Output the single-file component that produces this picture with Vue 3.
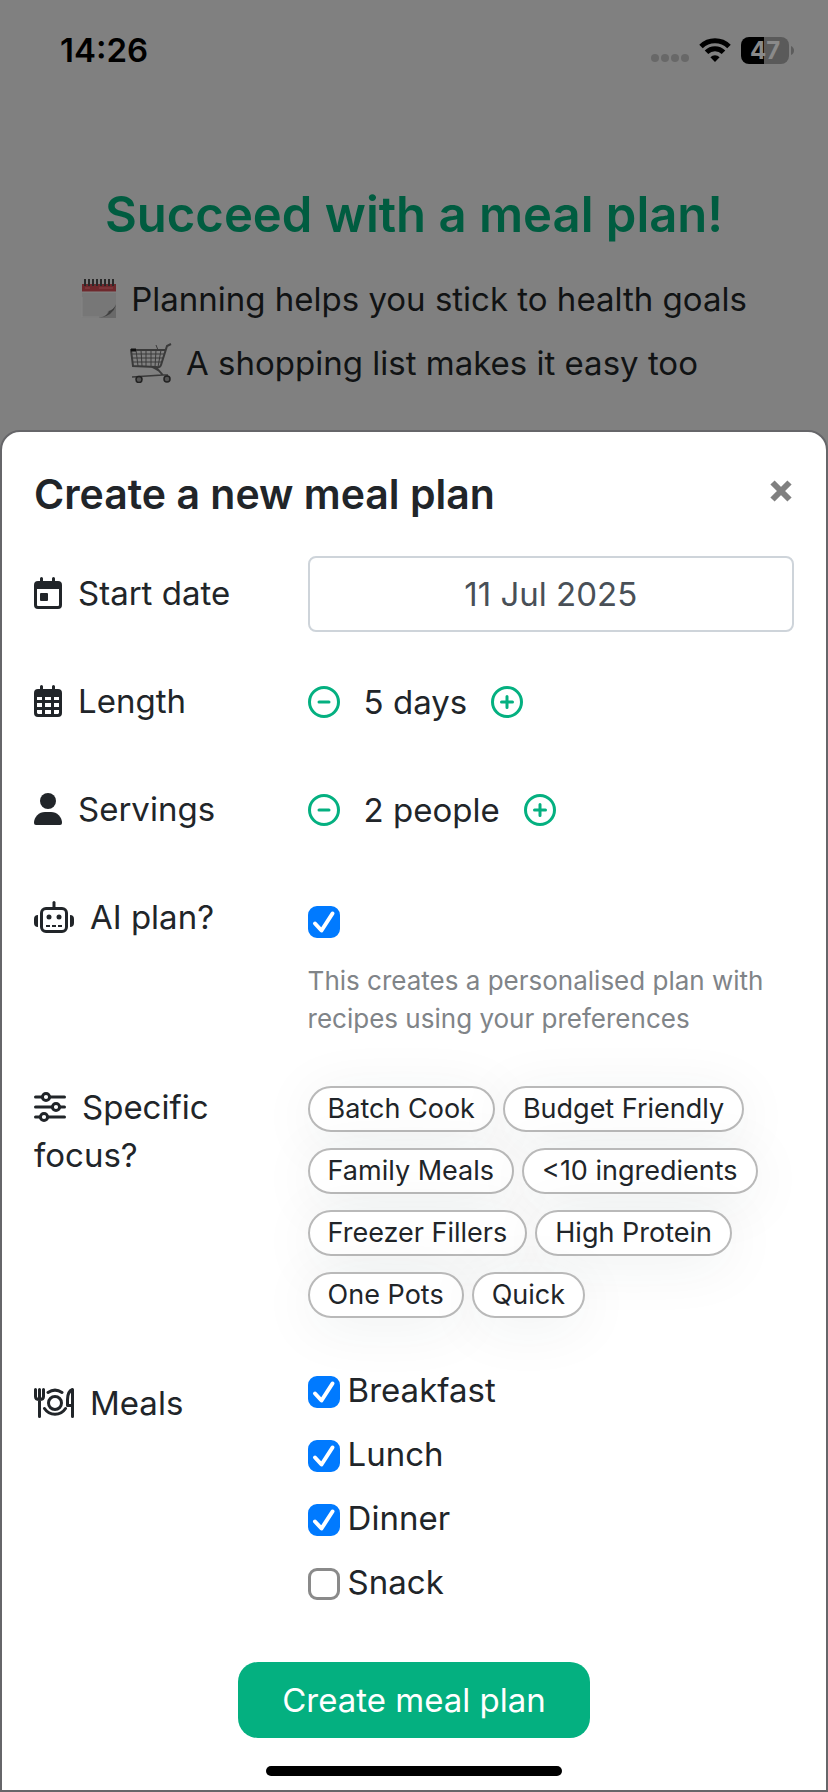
<script setup>
import { ref } from 'vue'

const startDate = ref('11 Jul 2025')
const days = ref(5)
const people = ref(2)
const aiPlan = ref(true)
const focusOptions = [
  'Batch Cook', 'Budget Friendly', 'Family Meals', '<10 ingredients',
  'Freezer Fillers', 'High Protein', 'One Pots', 'Quick',
]
const selectedFocus = ref([])
const meals = ref([
  { name: 'Breakfast', on: true },
  { name: 'Lunch', on: true },
  { name: 'Dinner', on: true },
  { name: 'Snack', on: false },
])

function toggleFocus(name) {
  const i = selectedFocus.value.indexOf(name)
  if (i < 0) selectedFocus.value.push(name)
  else selectedFocus.value.splice(i, 1)
}
</script>

<template>
  <div class="page">
    <div class="status">
      <span class="time">14:26</span>
      <div class="indicators">
        <svg class="dots" width="38" height="8" viewBox="0 0 38 8" aria-hidden="true">
          <circle cx="4" cy="4" r="4" /><circle cx="14" cy="4" r="4" /><circle cx="24" cy="4" r="4" /><circle cx="34" cy="4" r="4" />
        </svg>
        <svg class="wifi" width="32" height="24" viewBox="0 0 32 24" aria-hidden="true">
          <path d="M2 8.5a20 20 0 0 1 28 0" /><path d="M7.5 14.2a12 12 0 0 1 17 0" />
          <path class="wifi-tip" d="M16 24l-4.6-4.8a6.5 6.5 0 0 1 9.2 0z" />
        </svg>
        <div class="battery-wrap">
          <div class="battery">47</div>
          <svg width="3" height="9" viewBox="0 0 3 9" aria-hidden="true"><path d="M0 0q3 1.5 3 4.500t-3 4.500z" fill="#5c5c5c" /></svg>
        </div>
      </div>
    </div>

    <header class="intro">
      <h1>Succeed with a meal plan!</h1>
      <p>
        <svg width="36" height="40" viewBox="0 0 36 40" aria-hidden="true">
          <path d="M1 5h34v21L20 39H1z" fill="#777" />
          <path d="M1 5h34v8H1z" fill="#6e282c" />
          <path d="M1 13h34M1 18v20h17" stroke="#858585" fill="none" />
          <path d="M35 25v14H18q8-2 9-7 5-1 8-7z" fill="#696969" />
          <path d="M18 39q9-2 10-7 4-1 7-6-3 11-17 13z" fill="#3f3f3f" />
          <path d="M4 0v7M8 0v7M12 0v7M16 0v7M20 0v7M24 0v7M28 0v7M32 0v7" stroke="#292929" stroke-width="2" />
          <path d="M4 9h5M18 9h14" stroke="#854449" stroke-width="1" />
        </svg>
        <span>Planning helps you stick to health goals</span>
      </p>
      <p>
        <svg width="42" height="40" viewBox="0 0 42 40" aria-hidden="true" fill="none" stroke="#3a3a3a">
          <path d="M41 1l-4 2-6 19q-1 3-5 2L3 23 1 7h34" stroke-width="2" />
          <path d="M2 11h32M2 15h31M3 19h29M6 7l2 16M11 7l1 16M16 7v16M21 7v17M26 7l-1 17M31 7l-3 17M26 2l2 5" stroke-width="1" />
          <path d="M22 24q9 4 10 8L2 34M26 24l7 8h5" stroke-width="1.500" />
          <path d="M1 7h5" stroke="#111" stroke-width="3" />
          <circle cx="9" cy="36.500" r="3" fill="#555" stroke="#222" stroke-width="1.500" /><circle cx="37" cy="36" r="3" fill="#555" stroke="#222" stroke-width="1.500" />
        </svg>
        <span>A shopping list makes it easy too</span>
      </p>
    </header>

    <form class="sheet" role="dialog" aria-labelledby="sheet-title" @submit.prevent>
      <div class="sheet-head">
        <h2 id="sheet-title">Create a new meal plan</h2>
        <button type="button" class="close" aria-label="Close">
          <svg width="22" height="22" viewBox="0 0 22 22"><path d="M2.500 2.500l17 17M19.500 2.500l-17 17" stroke="#808080" stroke-width="6" /></svg>
        </button>
      </div>

      <div class="rows">
        <div class="row">
          <label class="name" for="start">
            <svg width="28" height="32" viewBox="0 0 28 32" aria-hidden="true">
              <path d="M6 1.500a1.500 1.500 0 0 1 3 0V4h9V1.500a1.500 1.500 0 0 1 3 0V4h3a4 4 0 0 1 4 4v20a4 4 0 0 1-4 4H4a4 4 0 0 1-4-4V8a4 4 0 0 1 4-4h2zM3 12v16a1 1 0 0 0 1 1h20a1 1 0 0 0 1-1V12z" fill="currentColor" fill-rule="evenodd" />
              <rect x="6" y="16" width="8" height="8" rx="1" fill="currentColor" />
            </svg>Start date</label>
          <input id="start" v-model="startDate" class="date" type="text">
        </div>

        <div class="row">
          <span class="name">
            <svg width="28" height="32" viewBox="0 0 28 32" aria-hidden="true">
              <path d="M6 1.500a1.500 1.500 0 0 1 3 0V4h9V1.500a1.500 1.500 0 0 1 3 0V4h3a4 4 0 0 1 4 4v20a4 4 0 0 1-4 4H4a4 4 0 0 1-4-4V8a4 4 0 0 1 4-4h2zM3 12v3h5v-3zm8 0v3h6v-3zm9 0v3h5v-3zM3 18v4h5v-4zm8 0v4h6v-4zm9 0v4h5v-4zM3 25v3l1 1h4v-4zm8 0v4h6v-4zm9 0v4h4l1-1v-3z" fill="currentColor" fill-rule="evenodd" />
            </svg>Length</span>
          <div class="stepper">
            <button type="button" aria-label="Fewer days" @click="days--">
              <svg width="32" height="32" viewBox="0 0 32 32"><circle cx="16" cy="16" r="14.500" /><path d="M11 16h10" /></svg>
            </button>
            <output>{{ days }} days</output>
            <button type="button" aria-label="More days" @click="days++">
              <svg width="32" height="32" viewBox="0 0 32 32"><circle cx="16" cy="16" r="14.500" /><path d="M10.500 16h11M16 10.500v11" /></svg>
            </button>
          </div>
        </div>

        <div class="row">
          <span class="name">
            <svg width="28" height="32" viewBox="0 0 28 32" aria-hidden="true" fill="currentColor">
              <circle cx="14" cy="8" r="8" /><path d="M0 30a11 11 0 0 1 11-11h6a11 11 0 0 1 11 11q0 2-2 2H2q-2 0-2-2z" />
            </svg>Servings</span>
          <div class="stepper">
            <button type="button" aria-label="Fewer people" @click="people--">
              <svg width="32" height="32" viewBox="0 0 32 32"><circle cx="16" cy="16" r="14.500" /><path d="M11 16h10" /></svg>
            </button>
            <output>{{ people }} people</output>
            <button type="button" aria-label="More people" @click="people++">
              <svg width="32" height="32" viewBox="0 0 32 32"><circle cx="16" cy="16" r="14.500" /><path d="M10.500 16h11M16 10.500v11" /></svg>
            </button>
          </div>
        </div>

        <div class="row">
          <label class="name" for="ai">
            <svg width="40" height="32" viewBox="0 0 40 32" aria-hidden="true" fill="none" stroke="currentColor" stroke-width="3">
              <rect x="7.500" y="7.500" width="25" height="23" rx="4.500" />
              <path d="M20 7V1.500" stroke-linecap="round" />
              <path d="M4 14v12a4 4 0 0 1-4-4v-4a4 4 0 0 1 4-4zM36 14v12a4 4 0 0 0 4-4v-4a4 4 0 0 0-4-4z" fill="currentColor" stroke="none" />
              <circle cx="15" cy="16" r="2.500" fill="currentColor" stroke="none" /><circle cx="25" cy="16" r="2.500" fill="currentColor" stroke="none" />
              <path d="M12 25h4M18 25h4M24 25h4" stroke-width="2" />
            </svg>AI plan?</label>
          <div class="ai">
            <span class="check">
              <input id="ai" v-model="aiPlan" type="checkbox" aria-describedby="ai-help">
              <svg width="32" height="32" viewBox="0 0 32 32" aria-hidden="true"><path d="M7 17.500l6.500 7L24.500 7.500" /></svg>
            </span>
            <p id="ai-help">This creates a personalised plan with recipes using your preferences</p>
          </div>
        </div>

        <div class="row">
          <span id="focus-name" class="name">
            <svg width="32" height="32" viewBox="0 0 32 32" aria-hidden="true" fill="none" stroke="currentColor" stroke-width="3" stroke-linecap="round">
              <circle cx="12" cy="6" r="3.600" /><circle cx="22" cy="16" r="3.600" /><circle cx="10" cy="26" r="3.600" />
              <path d="M1.500 6h7M15.500 6h15M1.500 16h17M25.500 16h5M1.500 26h5M13.500 26h17" />
            </svg>Specific focus?</span>
          <div class="chips" role="group" aria-labelledby="focus-name">
            <button
              v-for="name in focusOptions" :key="name" type="button" class="chip"
              :aria-pressed="selectedFocus.includes(name)" @click="toggleFocus(name)"
            >{{ name }}</button>
          </div>
        </div>

        <div class="row">
          <span id="meals-name" class="name">
            <svg width="40" height="32" viewBox="0 0 40 32" aria-hidden="true" fill="none" stroke="currentColor" stroke-width="3" stroke-linecap="round">
              <path d="M1.500 2.500v7q0 3 4 3t4-3v-7M5.500 2.500V29.500" />
              <circle cx="21" cy="16" r="6.500" />
              <path d="M14 5.500a12.500 12.500 0 0 1 14 0M10.500 21.500a12.500 12.500 0 0 0 21 0" />
              <path d="M38.500 29.500v-27q-5 2-5 10v6h5" stroke-linejoin="round" />
            </svg>Meals</span>
          <div class="meals" role="group" aria-labelledby="meals-name">
            <label v-for="meal in meals" :key="meal.name" class="meal">
              <span class="check">
                <input v-model="meal.on" type="checkbox">
                <svg width="32" height="32" viewBox="0 0 32 32" aria-hidden="true"><path d="M7 17.500l6.500 7L24.500 7.500" /></svg>
              </span>
              <span>{{ meal.name }}</span>
            </label>
          </div>
        </div>
      </div>

      <button type="submit" class="submit">Create meal plan</button>
      <div class="home-bar"></div>
    </form>
  </div>
</template>

<style>
body { background: #808080; }
</style>

<style scoped>
.page {
  min-height: 100vh;
  box-sizing: border-box;
  display: flex;
  flex-direction: column;
  background: #808080;
  color: #212529;
  font-family: Inter, "Open Sans", sans-serif;
  font-size: 33px;
  line-height: 48px;
}
button, input { font: inherit; color: inherit; margin: 0; }
h1, h2, p { margin: 0; }
svg { display: block; flex: none; }

.status {
  display: flex;
  justify-content: space-between;
  align-items: center;
  height: 100px;
  padding: 0 34px 0 60px;
  color: #000;
}
.time { font-weight: 600; }
.indicators { display: flex; align-items: center; gap: 10px; }
.dots { fill: #686868; align-self: flex-end; margin-bottom: 2px; }
.wifi { fill: none; stroke: #000; stroke-width: 5; }
.wifi-tip { fill: #000; stroke: none; }
.battery-wrap { display: flex; align-items: center; gap: 2px; }
.battery {
  width: 48px;
  height: 27px;
  border-radius: 8px;
  background: linear-gradient(90deg, #000 48%, #5a5a5a 48%);
  color: #8a8a8a;
  font-size: 24px;
  font-weight: 700;
  line-height: 27px;
  text-align: center;
}

.intro {
  display: flex;
  flex-direction: column;
  align-items: center;
  height: 330px;
  box-sizing: border-box;
  padding-top: 85px;
}
.intro h1 {
  color: #005c40;
  font-size: 49px;
  font-weight: 600;
  line-height: 60px;
  padding-bottom: 22px;
}
.intro p {
  display: flex;
  align-items: center;
  gap: 14px;
  height: 64px;
  color: #111314;
}

.sheet {
  flex: 1;
  display: flex;
  flex-direction: column;
  border: 2px solid #666669;
  border-radius: 20px 20px 0 0;
  background: #fff;
  padding: 32px 32px 14px;
}
.sheet-head { display: flex; align-items: center; justify-content: space-between; height: 60px; }
.sheet-head h2 { font-size: 41px; font-weight: 600; }
.close { display: flex; align-items: center; justify-content: flex-end; width: 40px; height: 40px; padding: 0 2px 6px 0; border: 0; background: none; }

.rows { display: flex; flex-direction: column; gap: 32px; padding-top: 32px; }
.row {
  display: grid;
  grid-template-columns: 9fr 16fr;
  align-items: start;
  min-height: 76px;
}
.name { padding: 13px 32px 0 0; }
.name svg { display: inline-block; vertical-align: -4px; margin-right: 16px; }
.date {
  width: 100%;
  height: 76px;
  box-sizing: border-box;
  border: 2px solid #ced4da;
  border-radius: 8px;
  background: #fff;
  color: #495057;
  text-align: center;
}
.stepper { display: flex; align-items: center; gap: 24px; padding-top: 14px; }
.stepper button { display: flex; padding: 0; border: 0; background: none; }
.stepper svg { fill: none; stroke: #04b080; stroke-width: 3; stroke-linecap: round; }

.check { display: grid; flex: none; width: 32px; height: 32px; }
.check input, .check svg { grid-area: 1 / 1; }
.check input {
  appearance: none;
  width: 32px;
  height: 32px;
  border: 3px solid #8a8a8a;
  border-radius: 9px;
  background: #fff;
}
.check input:checked { border-color: #007aff; background: #007aff; }
.check svg { fill: none; stroke: #fff; stroke-width: 4; stroke-linecap: round; stroke-linejoin: round; pointer-events: none; }

.ai { padding-top: 26px; }
.ai p { padding-top: 24px; color: #808488; font-size: 26px; line-height: 38px; }

.chips { display: flex; flex-wrap: wrap; gap: 16px 8px; padding: 16px 0; }
.chip {
  height: 46px;
  padding: 0 18px;
  border: 2px solid #b9b9b9;
  border-radius: 23px;
  background: #fff;
  box-shadow: 0 8px 60px rgba(30, 60, 50, 0.07);
  font-size: 27px;
  line-height: 40px;
}

.meals { display: flex; flex-direction: column; align-items: flex-start; gap: 16px; }
.meal { display: flex; align-items: center; gap: 8px; }
.meal .check { padding-top: 4px; }

.submit {
  align-self: center;
  height: 76px;
  margin-top: 56px;
  padding: 0 44px;
  border: 0;
  border-radius: 20px;
  background: #04b080;
  color: #fff;
}
.home-bar { align-self: center; width: 39%; height: 10px; margin-top: 28px; border-radius: 5px; background: #000; }
</style>
